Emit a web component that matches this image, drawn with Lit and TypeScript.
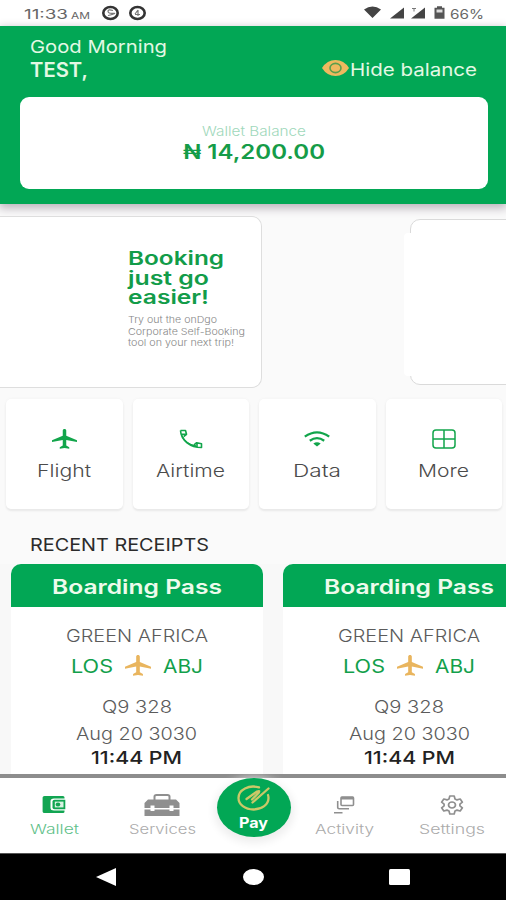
import { LitElement, html, css, svg } from "lit";
import { customElement } from "lit/decorators.js";

/* Wide-set label: one line of text stretched to a fixed measure, baseline at `size` px. */
const label = (text: string, width: number, size: number, cls = "") => html`
  <svg class="label ${cls}" width=${width} height=${size} role="text">
    <text x="0" y=${size} font-size=${size} textLength=${width} lengthAdjust="spacingAndGlyphs">${text}</text>
  </svg>`;

const plane = (w: number, h: number) => html`
  <svg class="icon" width=${w} height=${h} viewBox="2 2 20 20" preserveAspectRatio="none">
    <path d="M22 15v-1.700l-8.600-4.600V3.500C13.400 2.600 12.800 2 12 2s-1.400.6-1.400 1.500v5.200L2 13.300V15l8.600-2v5.500L8.200 20.200v1.600l3.800-.8 3.800.8v-1.600l-2.400-1.700V13z" fill="currentColor"/>
  </svg>`;

const icons = {
  phone: svg`<svg class="icon" width="24" height="20" viewBox="0 0 24 20" fill="none" stroke="currentColor" stroke-width="1.600" stroke-linejoin="round">
    <path d="M1.500 1.500h5l1 3.800-2.800 2.200M1.500 1.500C2 11.500 11.500 18.500 22.500 18.500v-3.800l-4.800-1-2.700 2.200M2.500 5.300h4.500M18 14.500v3.500"/><path d="M3 6.500C5 12 10 16 17 17" stroke-width="1.400"/></svg>`,
  wifi: svg`<svg class="icon" width="26" height="16" viewBox="0 0 26 16" fill="none" stroke="currentColor" stroke-width="2.300">
    <path d="M.8 5.600Q13-3 25.200 5.600M5.800 9.700Q13 4.600 20.200 9.700"/><path d="M9.300 12.500Q13 10 16.700 12.500L13 15.500z" fill="currentColor" stroke="none"/></svg>`,
  grid: svg`<svg class="icon" width="24" height="20" viewBox="0 0 24 20" fill="none" stroke="currentColor" stroke-width="1.500">
    <rect x="1" y="1" width="22" height="18" rx="3"/><path d="M12 1v18M1 10h22"/></svg>`,
  wallet: svg`<svg class="icon" width="24" height="22" viewBox="0 0 24 22">
    <path d="M2.500 2h18.500q1.500 0 1.500 1.500V4.500h-10.500q-3.500 0-3.500 2.500v7q0 2.500 3.500 2.500h10.500v1q0 1.500-1.500 1.500H2.500Q.6 19 .6 17.500v-14Q.6 2 2.500 2z" fill="currentColor"/>
    <path d="M12.500 5.800h10.800v9.400H12.500q-2 0-2-1.700v-6q0-1.700 2-1.700z" fill="currentColor"/>
    <path d="M12.800 7.600h8.700v5.800h-8.700z" fill="#d9f2e2"/>
    <ellipse cx="16" cy="10.500" rx="2.300" ry="1.900" fill="currentColor"/></svg>`,
  toolbox: svg`<svg class="icon" width="36" height="22" viewBox="0 0 36 22">
    <path d="M10.500 6V2.500Q10.500 1 12.500 1h11q2 0 2 1.500V6" fill="none" stroke="currentColor" stroke-width="2"/>
    <path d="M4 5.500h28l3.500 3.500v5h-6v-2.500h-4V14h-15v-2.500h-4V14h-6V9zM.5 15.500h6V17h4v-1.500h15V17h4v-1.500h6V22H.5z" fill="currentColor"/></svg>`,
  activity: svg`<svg class="icon" width="22" height="22" viewBox="0 0 22 22" fill="none" stroke="currentColor" stroke-width="1.600">
    <rect x="8" y="3" width="12.500" height="8.500" rx="1"/><path d="M8 4.200h12.500" stroke-width="2.600"/><path d="M4.700 7v6.500q0 1.200 1.500 1.200H16M1 18.800h8.500"/></svg>`,
  gear: svg`<svg class="icon" width="24" height="22" viewBox="0 0 24 22" fill="none" stroke="currentColor" stroke-width="1.700" stroke-linejoin="round">
    <path d="M9.800 2h4.400l.8 2.900 2 1 3.200-.9 2.200 3.200-2.500 2v1.600l2.500 2-2.200 3.200-3.200-.9-2 1-.8 2.900H9.800L9 17.100l-2-1-3.200.9-2.200-3.200 2.500-2v-1.600l-2.500-2L3.800 5l3.200.9 2-1z"/><ellipse cx="12" cy="11" rx="3.500" ry="3"/></svg>`,
};

@customElement("app-root")
export class AppRoot extends LitElement {
  static styles = css`
    :host { display: flex; flex-direction: column; width: 506px; height: 900px; overflow: hidden; background: #fafafa; font-family: Inter, "Open Sans", sans-serif; }
    * { box-sizing: border-box; }
    svg { display: block; flex: none; overflow: visible; }
    .label text { fill: currentColor; }
    .thin { font-weight: 300; }
    .medium { font-weight: 500; }
    .semi { font-weight: 600; }
    .bold { font-weight: 700; }

    .status { height: 26px; flex: none; background: #fff; color: #666; display: flex; align-items: flex-start; padding: 5px 22px 0 24px; }
    .status .left, .status .right { display: flex; align-items: flex-end; height: 14px; }
    .status .right { margin-left: auto; }

    .hero { height: 178px; flex: none; background: #02a755; color: #e3f8e4; padding: 9px 18.500px 0 20px; box-shadow: 0 3px 9px 1px #b9b2bb; }
    .greet { display: flex; justify-content: space-between; padding: 0 10.500px 0 9.500px; height: 62px; }
    .greet .names { display: flex; flex-direction: column; gap: 4.500px; }
    .hide { display: flex; align-items: center; gap: 1px; height: 16px; margin-top: 25px; }
    .hide .label { margin-top: -3px; }
    .hide .icon { color: #eeb95f; }
    .balance { height: 92px; background: #fff; border-radius: 9px; display: flex; flex-direction: column; align-items: center; padding-top: 26px; gap: 3px; color: #159c48; }
    .balance .caption { color: #a0d8bb; }

    .slides { display: flex; height: 195px; flex: none; padding-top: 12px; }
    .slide { width: 262px; height: 172px; background: #fff; border: 1px solid #dedede; border-left: 0; border-radius: 0 10px 10px 0; padding: 29px 0 0 128px; color: #129c49; }
    .slide .line { height: 19.500px; }
    .slide .fine { color: #888; margin-top: 8.500px; display: flex; flex-direction: column; gap: 2.200px; }
    .next { margin: 3px 0 0 142px; width: 102px; height: 166px; display: flex; position: relative; padding-left: 6px; }
    .next .outline { width: 110px; height: 166px; flex: none; border: 1px solid #dadada; border-radius: 10px; background: #fff; }
    .next .cover { position: absolute; left: 0; top: 14px; width: 20px; height: 143px; background: #fff; border-radius: 4px 0 0 4px; }

    .tiles { display: grid; grid-template-columns: repeat(4, 116.500px); gap: 10px; padding-left: 6px; height: 110px; flex: none; }
    .tile { background: #fff; border-radius: 5px; box-shadow: 0 2px 2px #e9e9e9, 0 0 3px #f1f1f1; display: flex; flex-direction: column; align-items: center; padding-top: 30px; color: #4b4b4b; }
    .tile .pic { height: 20px; display: flex; align-items: center; color: #12a54b; margin-bottom: 9.500px; }

    .heading { height: 55px; flex: none; padding: 24px 0 0 30px; color: #2b2b2b; }
    .receipts { display: flex; gap: 20px; padding-left: 10.500px; height: 209.500px; flex: none; overflow: hidden; background: #f8f8f8; }
    .pass { width: 252.500px; flex: none; background: #fff; border-radius: 10px 10px 0 0; display: flex; flex-direction: column; align-items: center; color: #5b5b5b; }
    .pass .head { align-self: stretch; height: 42.500px; background: #02a755; color: #eefbec; border-radius: 10px 10px 0 0; display: flex; justify-content: center; padding-top: 10px; margin-bottom: 17px; }
    .route { display: flex; align-items: center; gap: 12px; height: 20px; margin: 14px 0 20px; color: #12a04b; }
    .route .label { margin-top: -2px; }
    .route .icon { color: #e9b55e; }
    .time { color: #222; margin-top: 6.500px; }
    .date { margin-top: 9.500px; }

    .nav { height: 80.500px; flex: none; background: #fff; border-top: 4px solid #8d8d8d; border-bottom: 1px solid #555; display: grid; grid-template-columns: 108px 108px 74px 108px 108px; color: #ababab; }
    .tab { display: flex; flex-direction: column; align-items: center; padding-top: 16.500px; gap: 4.500px; }
    .tab .icon { color: #8f8f8f; }
    .tab.on { color: #5fc18a; }
    .tab.on .icon { color: #12a552; }
    .pay { width: 74px; height: 59px; border-radius: 50%; background: #02a755; color: #fff; display: flex; flex-direction: column; align-items: center; padding-top: 7.500px; gap: 2.500px; box-shadow: 0 3px 9px 3px #eee; margin-left: .5px; }
    .system { height: 46px; flex: none; background: #000; display: flex; align-items: center; padding: 0 0 0 96px; }
    .system .home { margin-left: 127px; }
    .system .recent { margin-left: 125px; }
  `;

  private pass() {
    return html`<div class="pass">
      <div class="head">${label("Boarding Pass", 170, 20, "semi")}</div>
      ${label("GREEN AFRICA", 142, 17.5, "thin")}
      <div class="route">${label("LOS", 42, 18)}${plane(26, 21)}${label("ABJ", 40, 18)}</div>
      ${label("Q9 328", 70, 17.5, "thin")}
      <div class="date">${label("Aug 20 3030", 121, 17.5, "thin")}</div>
      <div class="time">${label("11:44 PM", 91, 17.5, "medium")}</div>
    </div>`;
  }

  private tile(pic: unknown, text: string, width: number) {
    return html`<div class="tile"><div class="pic">${pic}</div>${label(text, width, 17.5, "thin")}</div>`;
  }

  private tab(pic: unknown, text: string, width: number, on = false) {
    return html`<div class="tab ${on ? "on" : ""}">${pic}${label(text, width, 13, "thin")}</div>`;
  }

  render() {
    return html`
      <div class="status">
        <div class="left">
          ${label("11:33", 44, 13)}
          <svg width="3" height="1"></svg>
          ${label("AM", 19, 9)}
          <svg width="50" height="14" viewBox="0 0 50 14">
            <g fill="#fff" stroke="#333" stroke-width="2.600"><ellipse cx="20.500" cy="8" rx="7.200" ry="6"/><ellipse cx="47.500" cy="8" rx="7.200" ry="6"/></g>
            <g fill="none" stroke="#777" stroke-width="1.200"><path d="M23 5.500q-5-1.500-5 .8t5 2-5 2.200M45 9.500h5M48 5v6M45 9l3-4"/></g>
          </svg>
        </div>
        <div class="right">
          <svg width="86" height="14" viewBox="0 0 86 14" fill="#444">
            <path d="M0 4.500Q8.500-1.500 17 4.500L8.500 13zM26 13.500 40 2.500v11zM47 13.500 61 2.500v11z"/>
            <path d="M48 3.500h4M50 3.500v3" stroke="#777"/>
            <path d="M73 1.200h5v1.600h2.500v11h-10v-11H73z" fill="#555"/><path d="M72.500 4.500h6v3h-6z" fill="#ddd"/>
          </svg>
          ${label("66%", 34, 13)}
        </div>
      </div>

      <div class="hero">
        <div class="greet">
          <div class="names">
            ${label("Good Morning", 137, 17.5)}
            ${label("TEST,", 58, 19.5, "semi")}
          </div>
          <div class="hide">
            <svg class="icon" width="27" height="16" viewBox="0 0 27 16"><path d="M0 8Q5 0 13.500 0T27 8Q22 16 13.500 16T0 8z" fill="currentColor"/><ellipse cx="13.500" cy="8" rx="5.500" ry="4.600" fill="none" stroke="#5a9e4c" stroke-width="1.600"/></svg>
            ${label("Hide balance", 127, 17.5)}
          </div>
        </div>
        <div class="balance">
          <div class="caption">${label("Wallet Balance", 104, 13, "thin")}</div>
          ${label("₦ 14,200.00", 142, 19.5, "semi")}
        </div>
      </div>

      <div class="slides">
        <div class="slide">
          <div class="line">${label("Booking", 96, 19, "semi")}</div>
          <div class="line">${label("just go", 81, 19, "semi")}</div>
          <div class="line">${label("easier!", 81, 19, "semi")}</div>
          <div class="fine">
            ${label("Try out the onDgo", 89, 9.5, "thin")}
            ${label("Corporate Self-Booking", 117, 9.5, "thin")}
            ${label("tool on your next trip!", 106, 9.5, "thin")}
          </div>
        </div>
        <div class="next"><div class="outline"></div><div class="cover"></div></div>
      </div>

      <div class="tiles">
        ${this.tile(plane(25, 20), "Flight", 54)}
        ${this.tile(icons.phone, "Airtime", 69)}
        ${this.tile(icons.wifi, "Data", 48)}
        ${this.tile(icons.grid, "More", 51)}
      </div>

      <div class="heading">${label("RECENT RECEIPTS", 179, 17.5)}</div>
      <div class="receipts">${this.pass()}${this.pass()}</div>

      <div class="nav">
        ${this.tab(icons.wallet, "Wallet", 49, true)}
        ${this.tab(icons.toolbox, "Services", 67)}
        <div class="pay">
          <svg width="33" height="26" viewBox="0 0 33 26" fill="none" stroke="#cbc868" stroke-width="2.300" stroke-linecap="round" stroke-linejoin="round">
            <path d="M22 2.400C12-.5 1.500 4.500 1.500 13c0 6.500 6.500 11.500 15 11.500S31.500 19.500 31.500 13q0-1.500-.5-3"/><path d="M9.500 14 20 6.500q3.500-1.500 1.500 1.500L15 14.500M15.500 17.500 31.500 3.500"/>
          </svg>
          ${label("Pay", 29, 14, "bold")}
        </div>
        ${this.tab(icons.activity, "Activity", 59)}
        ${this.tab(icons.gear, "Settings", 66)}
      </div>

      <div class="system">
        <svg width="20" height="18" viewBox="0 0 20 18" fill="#fff"><path d="M0 9 20 0v18z"/></svg>
        <svg class="home" width="21" height="16" viewBox="0 0 21 16" fill="#fff"><ellipse cx="10.500" cy="8" rx="10.500" ry="8"/></svg>
        <svg class="recent" width="21" height="16" viewBox="0 0 21 16" fill="#fff"><rect width="21" height="16" rx="1.500"/></svg>
      </div>`;
  }
}
